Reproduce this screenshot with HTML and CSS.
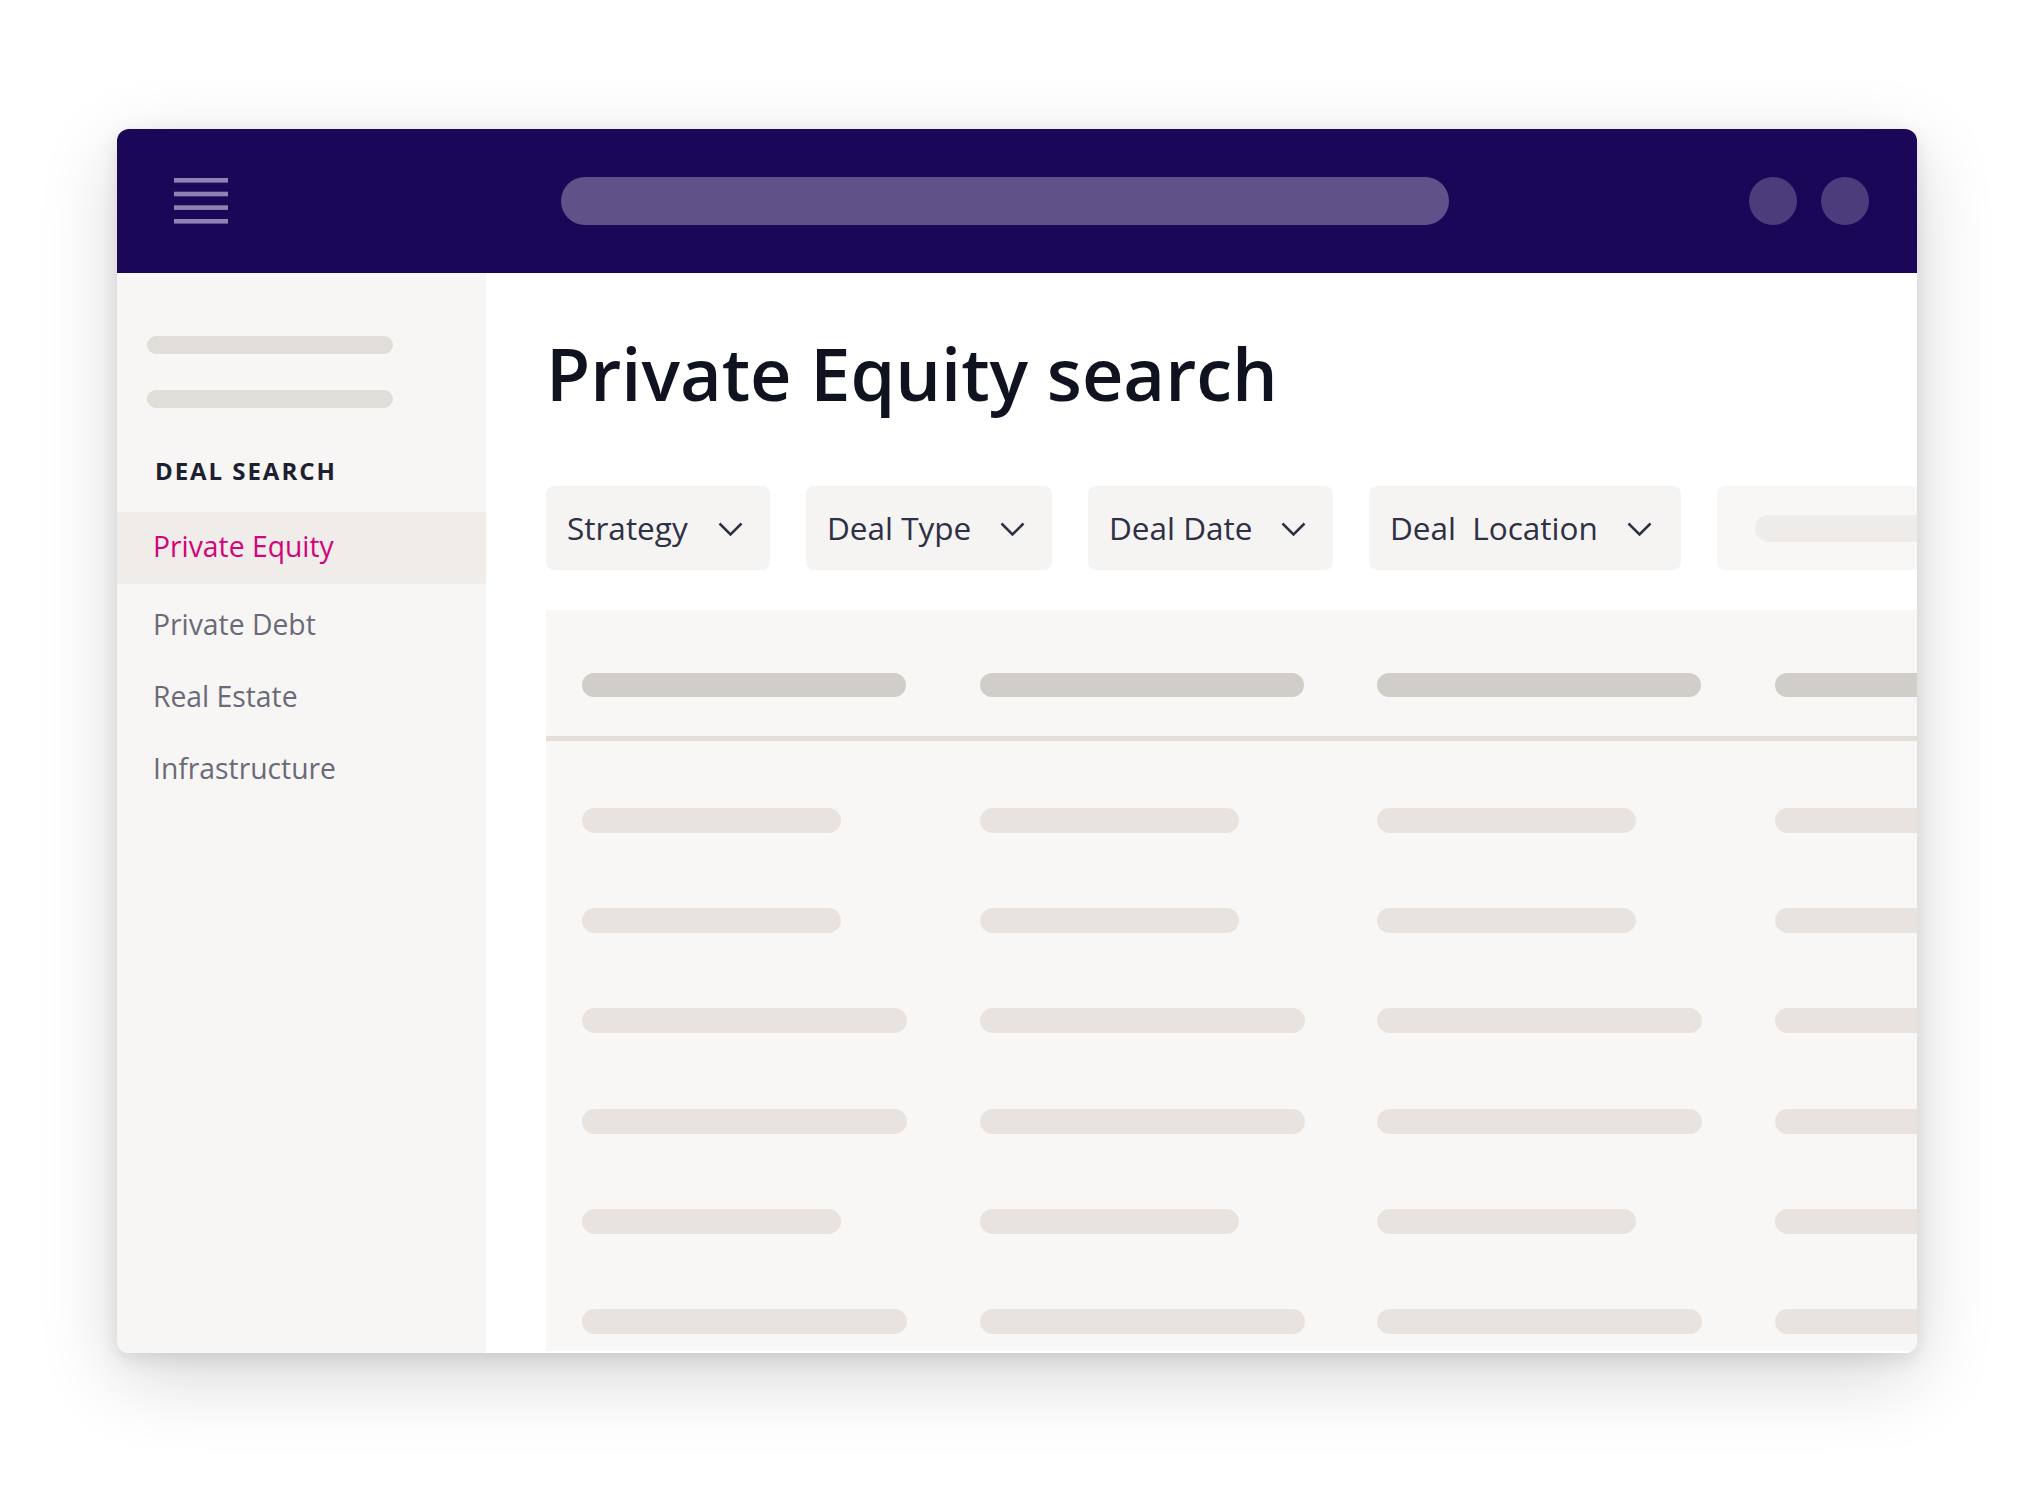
FILE: index.html
```html
<!DOCTYPE html>
<html lang="en">
<head>
<meta charset="utf-8">
<title>Private Equity search</title>
<link rel="stylesheet" href="styles.css">
</head>
<body>
<div class="window">
  <header class="topbar">
    <svg class="menu" width="54" height="46" viewBox="0 0 54 46" aria-hidden="true">
      <rect x="0" y="0" width="54" height="4.6" fill="#8f82b3"/>
      <rect x="0" y="13.7" width="54" height="4.6" fill="#8f82b3"/>
      <rect x="0" y="27.3" width="54" height="4.6" fill="#8f82b3"/>
      <rect x="0" y="41" width="54" height="4.6" fill="#8f82b3"/>
    </svg>
    <div class="search"></div>
    <div class="avatars">
      <span class="dot"></span>
      <span class="dot"></span>
    </div>
  </header>
  <div class="body">
    <aside class="sidebar">
      <div class="sk-bar"></div>
      <div class="sk-bar second"></div>
      <div class="section">DEAL SEARCH</div>
      <nav class="nav">
        <div class="nav-item active">Private Equity</div>
        <div class="nav-item first-rest">Private Debt</div>
        <div class="nav-item">Real Estate</div>
        <div class="nav-item">Infrastructure</div>
      </nav>
    </aside>
    <main class="main">
      <h1 class="title">Private Equity search</h1>
      <div class="filters">
        <div class="filter f-strategy"><span class="label">Strategy</span><svg class="chev" width="25" height="14" viewBox="0 0 25 14"><path d="M1.5 1.5 L12.5 12.5 L23.5 1.5" fill="none" stroke="#2e3045" stroke-width="2.5"/></svg></div>
        <div class="filter f-type"><span class="label">Deal Type</span><svg class="chev" width="25" height="14" viewBox="0 0 25 14"><path d="M1.5 1.5 L12.5 12.5 L23.5 1.5" fill="none" stroke="#2e3045" stroke-width="2.5"/></svg></div>
        <div class="filter f-date"><span class="label">Deal Date</span><svg class="chev" width="25" height="14" viewBox="0 0 25 14"><path d="M1.5 1.5 L12.5 12.5 L23.5 1.5" fill="none" stroke="#2e3045" stroke-width="2.5"/></svg></div>
        <div class="filter f-location"><span class="label">Deal&nbsp; Location</span><svg class="chev" width="25" height="14" viewBox="0 0 25 14"><path d="M1.5 1.5 L12.5 12.5 L23.5 1.5" fill="none" stroke="#2e3045" stroke-width="2.5"/></svg></div>
        <div class="filter ghost"><span class="ghost-bar"></span></div>
      </div>
      <div class="table">
        <div class="thead">
          <span class="hbar"></span><span class="hbar"></span><span class="hbar"></span><span class="hbar"></span>
        </div>
        <div class="tbody">
          <div class="row"><span class="cell short"></span><span class="cell short"></span><span class="cell short"></span><span class="cell short"></span></div>
          <div class="row"><span class="cell short"></span><span class="cell short"></span><span class="cell short"></span><span class="cell short"></span></div>
          <div class="row"><span class="cell long"></span><span class="cell long"></span><span class="cell long"></span><span class="cell long"></span></div>
          <div class="row"><span class="cell long"></span><span class="cell long"></span><span class="cell long"></span><span class="cell long"></span></div>
          <div class="row"><span class="cell short"></span><span class="cell short"></span><span class="cell short"></span><span class="cell short"></span></div>
          <div class="row"><span class="cell long"></span><span class="cell long"></span><span class="cell long"></span><span class="cell long"></span></div>
        </div>
      </div>
    </main>
  </div>
</div>
</body>
</html>
```
FILE: styles.css
```css
* { box-sizing: border-box; }
html, body { margin: 0; padding: 0; background: #ffffff; }
body {
  font-family: "Open Sans", "Noto Sans", sans-serif;
  padding: 129px 0 0 117px;
  width: 2040px;
  height: 1488px;
  overflow: hidden;
}
.window {
  width: 1800px;
  height: 1224px;
  border-radius: 12px;
  overflow: hidden;
  background: #ffffff;
  box-shadow: 0 24px 80px rgba(0,0,0,0.16), 0 6px 20px rgba(0,0,0,0.10);
  display: flex;
  flex-direction: column;
}
.topbar {
  height: 144px;
  flex: 0 0 144px;
  background: #1b0758;
  display: flex;
  align-items: center;
  padding: 0 48px 0 57px;
}
.menu { display: block; flex: 0 0 auto; }
.search {
  margin-left: 333px;
  width: 888px;
  height: 48px;
  border-radius: 24px;
  background: #5f5289;
}
.avatars {
  margin-left: auto;
  display: flex;
  gap: 24px;
}
.dot {
  width: 48px;
  height: 48px;
  border-radius: 50%;
  background: #4b3c7c;
}
.body {
  flex: 1;
  display: flex;
  min-height: 0;
}
.sidebar {
  width: 369px;
  flex: 0 0 369px;
  background: #f7f6f4;
  padding-top: 63px;
}
.sk-bar {
  margin-left: 30px;
  width: 246px;
  height: 18px;
  border-radius: 9px;
  background: #e1ddd8;
}
.sk-bar.second { margin-top: 36px; }
.section {
  margin-top: 47px;
  padding-left: 38px;
  font-size: 24px;
  line-height: 32px;
  font-weight: 700;
  letter-spacing: 1.95px;
  color: #1c2030;
}
.nav { margin-top: 25px; }
.nav-item {
  height: 72px;
  line-height: 69px;
  padding-left: 36px;
  font-size: 28.3px;
  font-weight: 500;
  color: #6b6a78;
}
.nav-item.active {
  background: #f0ece9;
  color: #d1057a;
}
.nav-item.first-rest { margin-top: 6px; }
.main {
  flex: 1;
  min-width: 0;
  padding-left: 60px;
  overflow: hidden;
  background: #ffffff;
}
.title {
  margin: 55px 0 0 0;
  font-size: 72px;
  line-height: 90px;
  font-weight: 600;
  color: #10131f;
  white-space: nowrap;
}
.filters {
  margin-top: 68px;
  display: flex;
  gap: 36px;
  height: 84px;
}
.filter {
  flex: 0 0 auto;
  height: 84px;
  border-radius: 8px;
  background: #f5f4f2;
  display: flex;
  align-items: center;
  justify-content: space-between;
  padding: 0 27px 0 21px;
}
.f-strategy { width: 224px; }
.f-type { width: 246px; }
.f-date { width: 245px; }
.f-location { width: 312px; padding-right: 29px; }
.label {
  font-size: 31.5px;
  line-height: 42px;
  color: #2e3045;
  white-space: pre;
}
.chev { display: block; flex: 0 0 auto; margin-top: 2px; }
.filter.ghost {
  width: 420px;
  background: #f8f7f6;
  padding-left: 38px;
  justify-content: flex-start;
}
.ghost-bar {
  display: block;
  width: 340px;
  height: 27px;
  border-radius: 14px;
  background: #efebe8;
}
.table {
  margin-top: 40px;
  height: 741px;
  background: #f8f7f5;
  overflow: hidden;
}
.thead, .row {
  display: grid;
  grid-template-columns: repeat(4, 324px);
  column-gap: 73.5px;
  padding-left: 36px;
  width: 1600px;
}
.thead {
  height: 131px;
  padding-top: 63px;
  border-bottom: 5px solid #e4dfd9;
}
.hbar {
  display: block;
  height: 24px;
  border-radius: 12px;
  background: #d1cdc8;
}
.tbody { padding-top: 29.5px; }
.row {
  height: 100.2px;
  align-items: center;
}
.cell {
  display: block;
  height: 25px;
  border-radius: 12.5px;
  background: #e8e3df;
}
.cell.short { width: 259px; }
.cell.long { width: 325px; }
```
